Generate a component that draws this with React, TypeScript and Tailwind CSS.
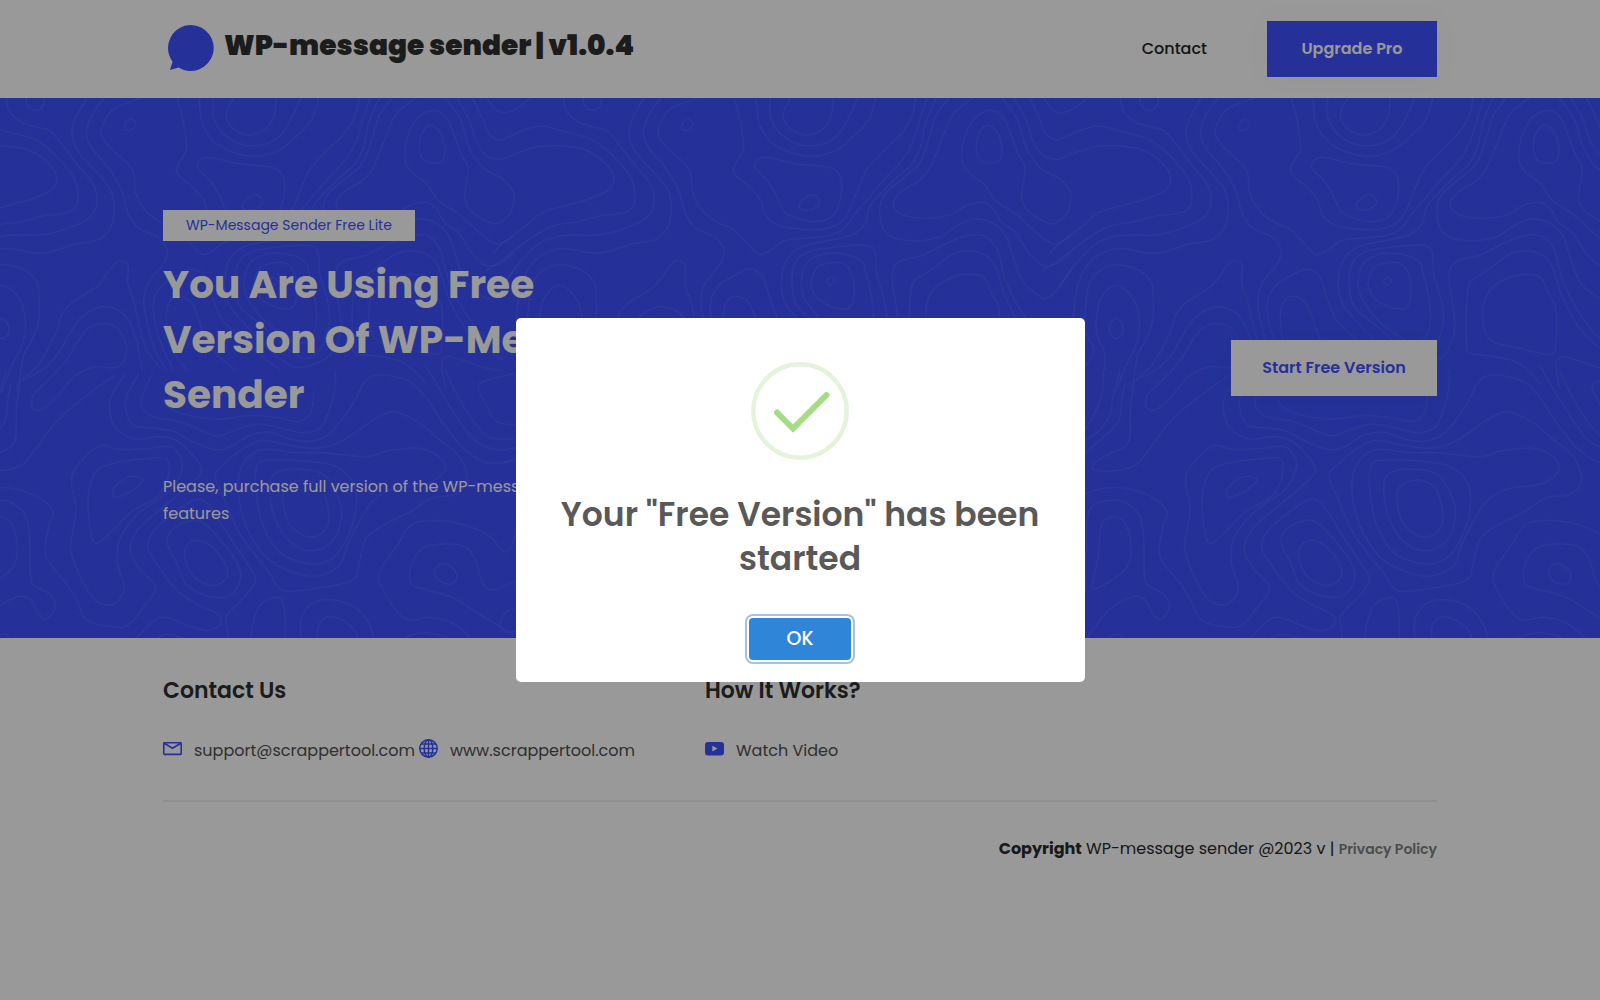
import React, { useState } from "react";

type Contour = { pts: number[]; closed?: boolean };

const open = (...pts: number[]): Contour => ({ pts });
const loop = (...pts: number[]): Contour => ({ pts, closed: true });

// Contour lines of the hero background tile, upper part.
const upper: Contour[] = [
  loop(518, 92, 526, 76, 542, 72, 551, 84, 542, 99, 527, 103),
  open(231, 0, 237, 32, 258, 44, 280, 35, 289, 0),
  open(0, 130, 50, 107, 110, 90, 173, 105, 258, 130, 313, 170, 368, 235, 384, 295, 368, 335, 328, 346, 278, 352, 218, 368, 148, 380, 78, 418, 0, 478, -50, 510),
  open(0, 187, 40, 170, 105, 150, 188, 150, 248, 163, 303, 205, 322, 245, 303, 278, 248, 303, 158, 327, 108, 345, 60, 385, 0, 430, -30, 460),
  open(174, 0, 183, 45, 218, 78, 263, 93, 303, 105, 338, 145, 388, 210, 428, 260, 439, 310, 423, 350, 378, 378, 288, 405, 178, 408, 108, 430, 50, 485, 0, 555),
  open(415, 0, 378, 65, 366, 115, 388, 170, 438, 225, 478, 275, 489, 330, 478, 385, 443, 420, 368, 435, 278, 460, 178, 446, 120, 460, 78, 498, 50, 560, 38, 660),
  open(465, 0, 423, 60, 408, 115, 428, 160, 478, 220, 513, 285, 528, 340, 558, 385, 618, 415, 643, 455, 628, 495, 588, 545, 574, 600, 585, 665, 605, 735, 640, 800),
  open(590, 0, 548, 15, 488, 40, 458, 80, 451, 115, 478, 155, 528, 200, 546, 230, 550, 280, 578, 335, 623, 370, 668, 390, 703, 425, 743, 463, 778, 450, 823, 422, 938, 410, 988, 390, 1018, 350, 1048, 315, 1108, 245, 1163, 185, 1193, 130, 1213, 65, 1235, 0),
  open(1201, 0, 1188, 60, 1158, 110, 1098, 170, 1058, 215, 1028, 280, 1003, 340, 973, 375, 928, 390, 868, 390, 798, 378, 763, 350, 748, 305, 713, 265, 673, 230, 673, 205, 698, 160, 696, 120, 686, 60, 668, 0),
  open(1262, 0, 1228, 80, 1213, 150, 1188, 200, 1138, 245, 1068, 320, 1053, 370, 1018, 405, 938, 425, 868, 440, 823, 480, 808, 550, 823, 610, 868, 665, 930, 730, 1010, 790, 1100, 768, 1140, 710, 1145, 640, 1130, 530, 1150, 485, 1220, 465, 1290, 430, 1350, 408, 1400, 410, 1435, 450, 1460, 540, 1500, 620, 1550, 690, 1617, 745),
  open(1302, 0, 1258, 60, 1233, 140, 1208, 200, 1158, 245, 1108, 290, 1094, 350, 1118, 405, 1188, 424, 1268, 412, 1318, 380, 1368, 360, 1418, 370, 1458, 405, 1478, 460, 1508, 540, 1558, 585, 1583, 588, 1613, 560, 1650, 505),
  open(1375, 0, 1308, 55, 1278, 120, 1238, 215, 1208, 250, 1158, 280, 1133, 315, 1153, 345, 1208, 358, 1293, 350, 1348, 320, 1398, 313, 1423, 330, 1448, 370, 1488, 400, 1528, 460, 1568, 495, 1608, 490, 1650, 460),
  open(1650, 410, 1598, 433, 1538, 390, 1488, 345, 1428, 305, 1398, 260, 1353, 225, 1333, 190, 1338, 130, 1368, 70, 1408, 46, 1448, 60, 1473, 110, 1493, 165, 1516, 215, 1506, 290, 1518, 330, 1558, 360, 1598, 374, 1633, 350, 1649, 310, 1646, 280, 1618, 245, 1558, 210, 1518, 150, 1495, 75, 1455, 15, 1435, 0),
  loop(1403, 88, 1381, 115, 1375, 160, 1388, 190, 1418, 198, 1443, 190, 1448, 150, 1433, 105),
  open(1478, 0, 1518, 70, 1538, 130, 1568, 175, 1608, 187, 1617, 187),
  open(1525, 0, 1558, 70, 1578, 115, 1607, 131, 1617, 130),
  open(1565, 0, 1593, 40, 1618, 52, 1646, 45, 1678, 25, 1700, 5),
  open(735, 0, 743, 80, 778, 135, 838, 168, 903, 178, 968, 160, 1018, 120, 1063, 70, 1085, 0),
  open(778, 0, 775, 55, 798, 105, 848, 140, 898, 148, 948, 135, 988, 95, 1035, 0),
  open(840, 0, 815, 50, 823, 85, 858, 112, 888, 116, 928, 100, 953, 60, 960, 0),
  loop(748, 183, 778, 183, 848, 200, 928, 207, 968, 220, 983, 255, 978, 310, 958, 350, 918, 367, 868, 362, 818, 340, 793, 290, 768, 250, 733, 215, 733, 195),
  loop(860, 320, 878, 298, 903, 290, 920, 312, 898, 332, 870, 334),
  open(75, 790, 98, 740, 72, 680, 75, 610, 85, 550, 115, 510, 165, 493, 230, 510, 265, 545, 270, 580, 270, 650, 255, 700, 225, 760, 210, 850),
  open(128, 800, 130, 750, 106, 690, 110, 620, 130, 575, 165, 553, 200, 575, 225, 620, 230, 690, 215, 740, 190, 790, 160, 865),
  loop(163, 649, 180, 665, 182, 690, 165, 707, 147, 695, 144, 670),
  open(620, 790, 580, 735, 560, 660, 545, 600, 527, 545, 530, 500, 515, 483, 490, 490, 440, 555, 370, 600, 335, 640, 320, 690, 270, 780, 215, 835, 207, 859),
  open(570, 800, 558, 735, 550, 700, 520, 640, 480, 618, 440, 618, 390, 650, 355, 700, 330, 745, 290, 790, 240, 820),
  loop(455, 664, 410, 680, 380, 720, 350, 770, 300, 825, 255, 870, 250, 905, 275, 915, 320, 880, 370, 820, 430, 790, 500, 790, 525, 740, 500, 680),
  open(660, 800, 630, 735, 612, 680, 602, 610, 625, 555, 680, 520, 720, 505, 755, 530, 775, 590, 800, 650, 840, 690, 890, 735, 970, 800),
  open(700, 800, 655, 735, 640, 650, 650, 600, 680, 585, 715, 605, 740, 670, 770, 735, 840, 800),
  loop(1058, 437, 978, 440, 888, 455, 848, 490, 840, 560, 858, 620, 918, 670, 985, 730, 1040, 765, 1085, 740, 1113, 665, 1108, 600, 1085, 520, 1081, 460),
  loop(978, 460, 918, 465, 878, 495, 866, 560, 888, 610, 930, 660, 1000, 710, 1040, 720, 1070, 690, 1075, 620, 1055, 520, 1038, 480),
  loop(958, 487, 913, 500, 895, 550, 918, 595, 973, 620, 1008, 615, 1021, 560, 1008, 510, 988, 490),
  loop(951, 530, 962, 541, 951, 552, 940, 541),
  open(1395, 840, 1360, 800, 1310, 770, 1240, 757, 1190, 750, 1180, 720, 1182, 590, 1195, 540, 1240, 510, 1300, 465, 1350, 453, 1400, 465, 1430, 500, 1460, 590, 1510, 680, 1568, 735, 1617, 770),
  loop(1380, 523, 1320, 525, 1260, 555, 1232, 600, 1230, 670, 1255, 715, 1330, 735, 1425, 753, 1440, 720, 1440, 620, 1420, 580, 1400, 535),
  open(1450, 850, 1440, 780, 1460, 760, 1500, 770, 1568, 793, 1617, 800),
];

// Contour lines of the hero background tile, lower part.
const lower: Contour[] = [
  open(125, 0, 120, 80, 72, 175, 30, 210),
  open(175, 0, 155, 70, 145, 130, 110, 180, 72, 205, 30, 230),
  open(190, 40, 180, 80, 170, 150, 120, 200, 72, 240, 0, 270),
  open(215, 50, 205, 100, 203, 190, 185, 225, 140, 245, 100, 270, 100, 290, 160, 292, 220, 275, 260, 230, 320, 150, 400, 80, 490, 15),
  open(520, 10, 480, 75, 475, 120, 495, 170, 550, 200, 620, 193, 670, 205, 715, 245, 742, 292, 700, 340, 640, 390, 560, 460, 535, 520, 560, 575, 600, 615, 608, 640, 580, 680, 530, 740, 480, 745, 410, 725, 380, 670, 350, 620, 300, 560, 288, 520, 300, 450, 310, 410, 270, 370, 200, 345, 130, 342, 72, 360),
  open(560, 10, 525, 75, 522, 115, 545, 160, 600, 168, 660, 178, 720, 210, 790, 232, 840, 215, 880, 190, 940, 180, 1000, 200, 1060, 207, 1120, 180, 1180, 100, 1215, 35, 1255, 14, 1340, 30, 1390, 75, 1440, 150, 1500, 225, 1568, 268, 1650, 265),
  loop(1300, 121, 1240, 145, 1190, 180, 1130, 215, 1060, 227, 980, 215, 915, 204, 860, 230, 800, 280, 782, 310, 810, 380, 850, 470, 900, 540, 940, 590, 980, 640, 1080, 633, 1180, 610, 1200, 560, 1220, 490, 1270, 450, 1350, 410, 1410, 372, 1480, 360, 1515, 320, 1490, 250, 1430, 200, 1370, 150),
  open(600, 10, 570, 75, 570, 110, 600, 135, 680, 150, 740, 175, 790, 191, 850, 170, 910, 157, 980, 170, 1040, 182, 1090, 165, 1115, 110, 1130, 50, 1130, 0),
  open(630, 80, 650, 110, 720, 135, 800, 142, 880, 132, 960, 138, 1025, 149, 1060, 120, 1068, 60),
  loop(1030, 320, 990, 335, 978, 380, 1000, 450, 1055, 485, 1100, 465, 1112, 420, 1095, 350, 1065, 325),
  loop(1000, 288, 950, 305, 940, 350, 955, 430, 1000, 500, 1060, 525, 1120, 500, 1148, 430, 1135, 360, 1090, 300),
  loop(930, 262, 900, 290, 900, 350, 920, 450, 970, 530, 1060, 563, 1130, 540, 1180, 450, 1190, 350, 1150, 290, 1080, 268),
  loop(930, 230, 880, 250, 850, 310, 855, 400, 890, 490, 950, 560, 1060, 599, 1140, 570, 1165, 510, 1200, 440, 1240, 380, 1300, 345, 1400, 330, 1448, 290, 1430, 250, 1370, 227, 1280, 235, 1220, 252, 1100, 240, 1010, 240),
  loop(450, 218, 500, 230, 580, 228, 650, 222, 680, 250, 685, 290, 650, 350, 560, 415, 505, 490, 498, 560, 518, 630, 500, 670, 470, 682, 430, 665, 390, 600, 362, 520, 370, 460, 378, 400, 366, 340, 368, 300, 400, 255),
  loop(640, 258, 580, 258, 500, 268, 440, 290, 415, 350, 415, 430, 425, 490, 440, 503, 470, 480, 540, 410, 610, 370, 645, 310),
  loop(570, 315, 530, 310, 490, 340, 488, 368, 520, 360, 560, 335),
  open(450, 803, 500, 797, 550, 780, 600, 730, 640, 718, 710, 745, 760, 756, 795, 740, 790, 710, 730, 680, 670, 640, 610, 560, 585, 510, 610, 460, 690, 395, 735, 374, 770, 400, 820, 480, 880, 570, 899, 610, 870, 655, 815, 715, 820, 770, 818, 810),
  loop(715, 436, 660, 460, 642, 500, 670, 560, 700, 625, 770, 658, 830, 650, 856, 600, 840, 550, 790, 485, 750, 445),
  loop(725, 495, 697, 515, 697, 560, 725, 605, 775, 626, 815, 605, 812, 565, 770, 510),
  open(72, 640, 76, 520, 80, 430, 100, 390, 150, 378, 190, 385, 230, 420, 243, 490, 245, 590, 255, 625, 300, 650, 318, 690, 290, 725, 265, 700, 245, 665, 210, 658, 150, 690, 110, 735, 72, 785),
  loop(155, 427, 120, 450, 112, 540, 98, 600, 98, 635, 150, 610, 195, 570, 207, 510, 190, 445),
  open(120, 810, 145, 775, 175, 766, 183, 785, 180, 810),
  open(885, 810, 890, 740, 915, 680, 965, 660, 982, 690, 985, 760, 980, 810),
  open(1035, 810, 1030, 730, 1060, 680, 1120, 667, 1190, 690, 1235, 750, 1243, 810),
  open(1080, 810, 1080, 750, 1100, 720, 1140, 722, 1185, 755, 1207, 810),
  open(585, 805, 630, 770, 680, 775, 735, 805),
  open(1550, 805, 1480, 740, 1410, 718, 1330, 720, 1265, 630, 1262, 580, 1310, 510, 1350, 450, 1410, 437, 1490, 445, 1575, 480, 1622, 528, 1650, 490, 1655, 430),
  open(1650, 770, 1568, 720, 1470, 660, 1390, 637, 1350, 620, 1350, 570, 1380, 520, 1440, 505, 1510, 515, 1540, 560, 1555, 610, 1585, 638, 1660, 610),
  loop(1420, 585, 1435, 563, 1462, 567, 1484, 592, 1475, 618, 1450, 620, 1428, 608),
  open(1290, 805, 1350, 770, 1400, 763, 1450, 775, 1495, 805),
  open(1450, 0, 1500, 100, 1568, 190, 1650, 200),
  open(1395, -10, 1460, 100, 1530, 200, 1600, 232, 1650, 225),
  open(1650, 10, 1570, 30, 1545, 50, 1568, 100, 1600, 150, 1660, 160),
  open(1680, 690, 1630, 700, 1610, 735, 1625, 760, 1680, 755),
];

function toPath({ pts, closed }: Contour): string {
  const n = pts.length / 2;
  const at = (i: number): [number, number] => {
    const k = closed ? (i + n) % n : Math.max(0, Math.min(n - 1, i));
    return [pts[2 * k], pts[2 * k + 1]];
  };
  let d = `M${pts[0]} ${pts[1]}`;
  for (let i = 0; i < (closed ? n : n - 1); i++) {
    const [a, b, c, e] = [at(i - 1), at(i), at(i + 1), at(i + 2)];
    const r = Math.round;
    d += `C${r(b[0] + (c[0] - a[0]) / 6)} ${r(b[1] + (c[1] - a[1]) / 6)} ${r(c[0] - (e[0] - b[0]) / 6)} ${r(c[1] - (e[1] - b[1]) / 6)} ${c[0]} ${c[1]}`;
  }
  return d;
}

const upperPath = upper.map(toPath).join("");
const lowerPath = lower.map(toPath).join("");

function Topography() {
  return (
    <svg aria-hidden="true" className="absolute inset-0 h-full w-full">
      <defs>
        <g id="contours" transform="scale(0.3444) translate(-157 -9)" fill="none" stroke="#fff" strokeOpacity="0.05" strokeWidth="4">
          <path d={upperPath} />
          <path d={lowerPath} transform="translate(0 799)" />
        </g>
        <pattern id="topography" width="557" height="557" patternUnits="userSpaceOnUse">
          <use href="#contours" x="-557" />
          <use href="#contours" />
          <use href="#contours" x="557" />
        </pattern>
      </defs>
      <rect width="100%" height="100%" fill="url(#topography)" />
    </svg>
  );
}

const container = "mx-auto w-full max-w-[1322px] px-6";

function MailIcon() {
  return (
    <svg aria-hidden="true" viewBox="0 0 19 19" className="mb-[5px] h-[19px] w-[19px] shrink-0" fill="none" stroke="#3e53ff" strokeWidth="1.6" strokeLinejoin="round">
      <rect x="0.8" y="3.8" width="17.4" height="11.6" rx="0.6" />
      <path d="M1.2 4.2 9.5 9.2 17.8 4.2" />
    </svg>
  );
}

function GlobeIcon() {
  return (
    <svg aria-hidden="true" viewBox="0 0 19 19" className="mb-[5px] h-[19px] w-[19px] shrink-0" fill="none" stroke="#3e53ff" strokeWidth="1.5">
      <circle cx="9.5" cy="9.5" r="8.7" />
      <ellipse cx="9.5" cy="9.5" rx="4.3" ry="8.7" />
      <path d="M9.5 .8v17.4M.8 9.5h17.4M2.2 5h14.6M2.2 14h14.6" />
    </svg>
  );
}

function VideoIcon() {
  return (
    <svg aria-hidden="true" viewBox="0 0 19 19" className="mb-[5px] h-[19px] w-[19px] shrink-0">
      <rect y="3" width="19" height="13.4" rx="3" fill="#3e53ff" />
      <path d="M7.400 6.800v5.600l5-2.800z" fill="#fff" />
    </svg>
  );
}

function FooterLink({ icon, children }: { icon: React.ReactNode; children: React.ReactNode }) {
  return (
    <a href="#" className="flex items-center gap-3 text-base text-[#505050]">
      {icon}
      <span>{children}</span>
    </a>
  );
}

function SuccessDialog({ onClose }: { onClose: () => void }) {
  return (
    <div className="fixed inset-0 z-10 flex items-center justify-center bg-black/40 p-4">
      <div role="dialog" aria-modal="true" aria-labelledby="dialog-title" className="flex w-full max-w-[569px] flex-col items-center rounded-[5px] bg-white px-7 pt-11 pb-[22px]">
        <svg aria-hidden="true" viewBox="0 0 98 98" className="h-[98px] w-[98px]" fill="none">
          <circle cx="49" cy="49" r="46.7" stroke="#e3f4da" strokeWidth="4.4" />
          <path d="M26 50.5 42 66.5 75.5 33" stroke="#a5dc86" strokeWidth="6" strokeLinecap="round" />
        </svg>
        <h2 id="dialog-title" className="mt-[33px] text-center text-[33px] leading-11 font-semibold text-[#595959]">
          Your "Free Version" has been started
        </h2>
        <button
          type="button"
          onClick={onClose}
          className="mt-[37px] h-[42px] w-[102px] rounded-[4px] bg-[#2f86d8] text-[19px] font-medium text-white shadow-[0_0_0_2px_#fff,0_0_0_4px_#a9c1de]"
        >
          OK
        </button>
      </div>
    </div>
  );
}

export default function App() {
  const [dialogOpen, setDialogOpen] = useState(true);
  return (
    <div className="min-h-screen bg-white font-[Poppins,Inter,sans-serif] text-[#2f2f2f]">
      <header>
        <div className={`${container} flex min-h-[98px] flex-wrap items-center justify-between gap-4`}>
          <a href="#" className="flex items-center gap-[5px]">
            <svg aria-hidden="true" viewBox="0 0 56 48" className="h-12 w-14" fill="#3e53ff">
              <path d="M28 0a23 23 0 1 1-12.500 42.500L7 45l2.600-8.200A23 23 0 0 1 28 0z" />
            </svg>
            <span className="pb-1.5 text-[28px] leading-10 font-black">WP-message sender | v1.0.4</span>
          </a>
          <nav className="flex items-center gap-[60px]">
            <a href="#" className="text-base font-medium text-[#222]">Contact</a>
            <a href="#" className="flex h-14 w-[170px] items-center justify-center bg-[#3e53ff] text-base font-semibold text-white shadow-[0_0_32px_rgba(0,0,0,0.03)]">
              Upgrade Pro
            </a>
          </nav>
        </div>
      </header>

      <section className="relative bg-[#3e53ff]">
        <Topography />
        <div className={`${container} relative flex min-h-[540px] flex-wrap items-center justify-between gap-8`}>
          <div className="w-full max-w-[530px] text-white">
            <span className="flex h-[31px] w-[252px] items-center justify-center bg-white text-[14px] text-[#3e53ff]">WP-Message Sender Free Lite</span>
            <h1 className="mt-4 text-[39px] leading-[55px] font-bold">You Are Using Free Version Of WP-Message Sender</h1>
            <p className="mt-[51px] text-base leading-[27px]">
              Please, purchase full version of the WP-message sender for all features
            </p>
          </div>
          <button type="button" onClick={() => setDialogOpen(true)} className="h-14 w-[206px] bg-white text-base font-semibold text-[#3e53ff] shadow-[0_0_32px_rgba(0,0,0,0.06)]">
            Start Free Version
          </button>
        </div>
      </section>

      <footer className={container}>
        <div className="flex flex-wrap gap-y-8 border-b-2 border-[#f0f0f0] pt-[37px] pb-[37px]">
          <div className="w-full md:w-[542px]">
            <h3 className="text-[22px] leading-8 font-semibold">Contact Us</h3>
            <div className="mt-8 flex flex-wrap gap-1">
              <FooterLink icon={<MailIcon />}>support@scrappertool.com</FooterLink>
              <FooterLink icon={<GlobeIcon />}>www.scrappertool.com</FooterLink>
            </div>
          </div>
          <div>
            <h3 className="text-[22px] leading-8 font-semibold">How It Works?</h3>
            <div className="mt-8">
              <FooterLink icon={<VideoIcon />}>Watch Video</FooterLink>
            </div>
          </div>
        </div>
        <p className="py-[35px] text-right text-base text-[#2a2a2a]">
          <strong className="font-bold">Copyright</strong> WP-message sender @2023 v |{" "}
          <a href="#" className="text-[14px] font-semibold text-[#808080]">Privacy Policy</a>
        </p>
      </footer>

      {dialogOpen && <SuccessDialog onClose={() => setDialogOpen(false)} />}
    </div>
  );
}
